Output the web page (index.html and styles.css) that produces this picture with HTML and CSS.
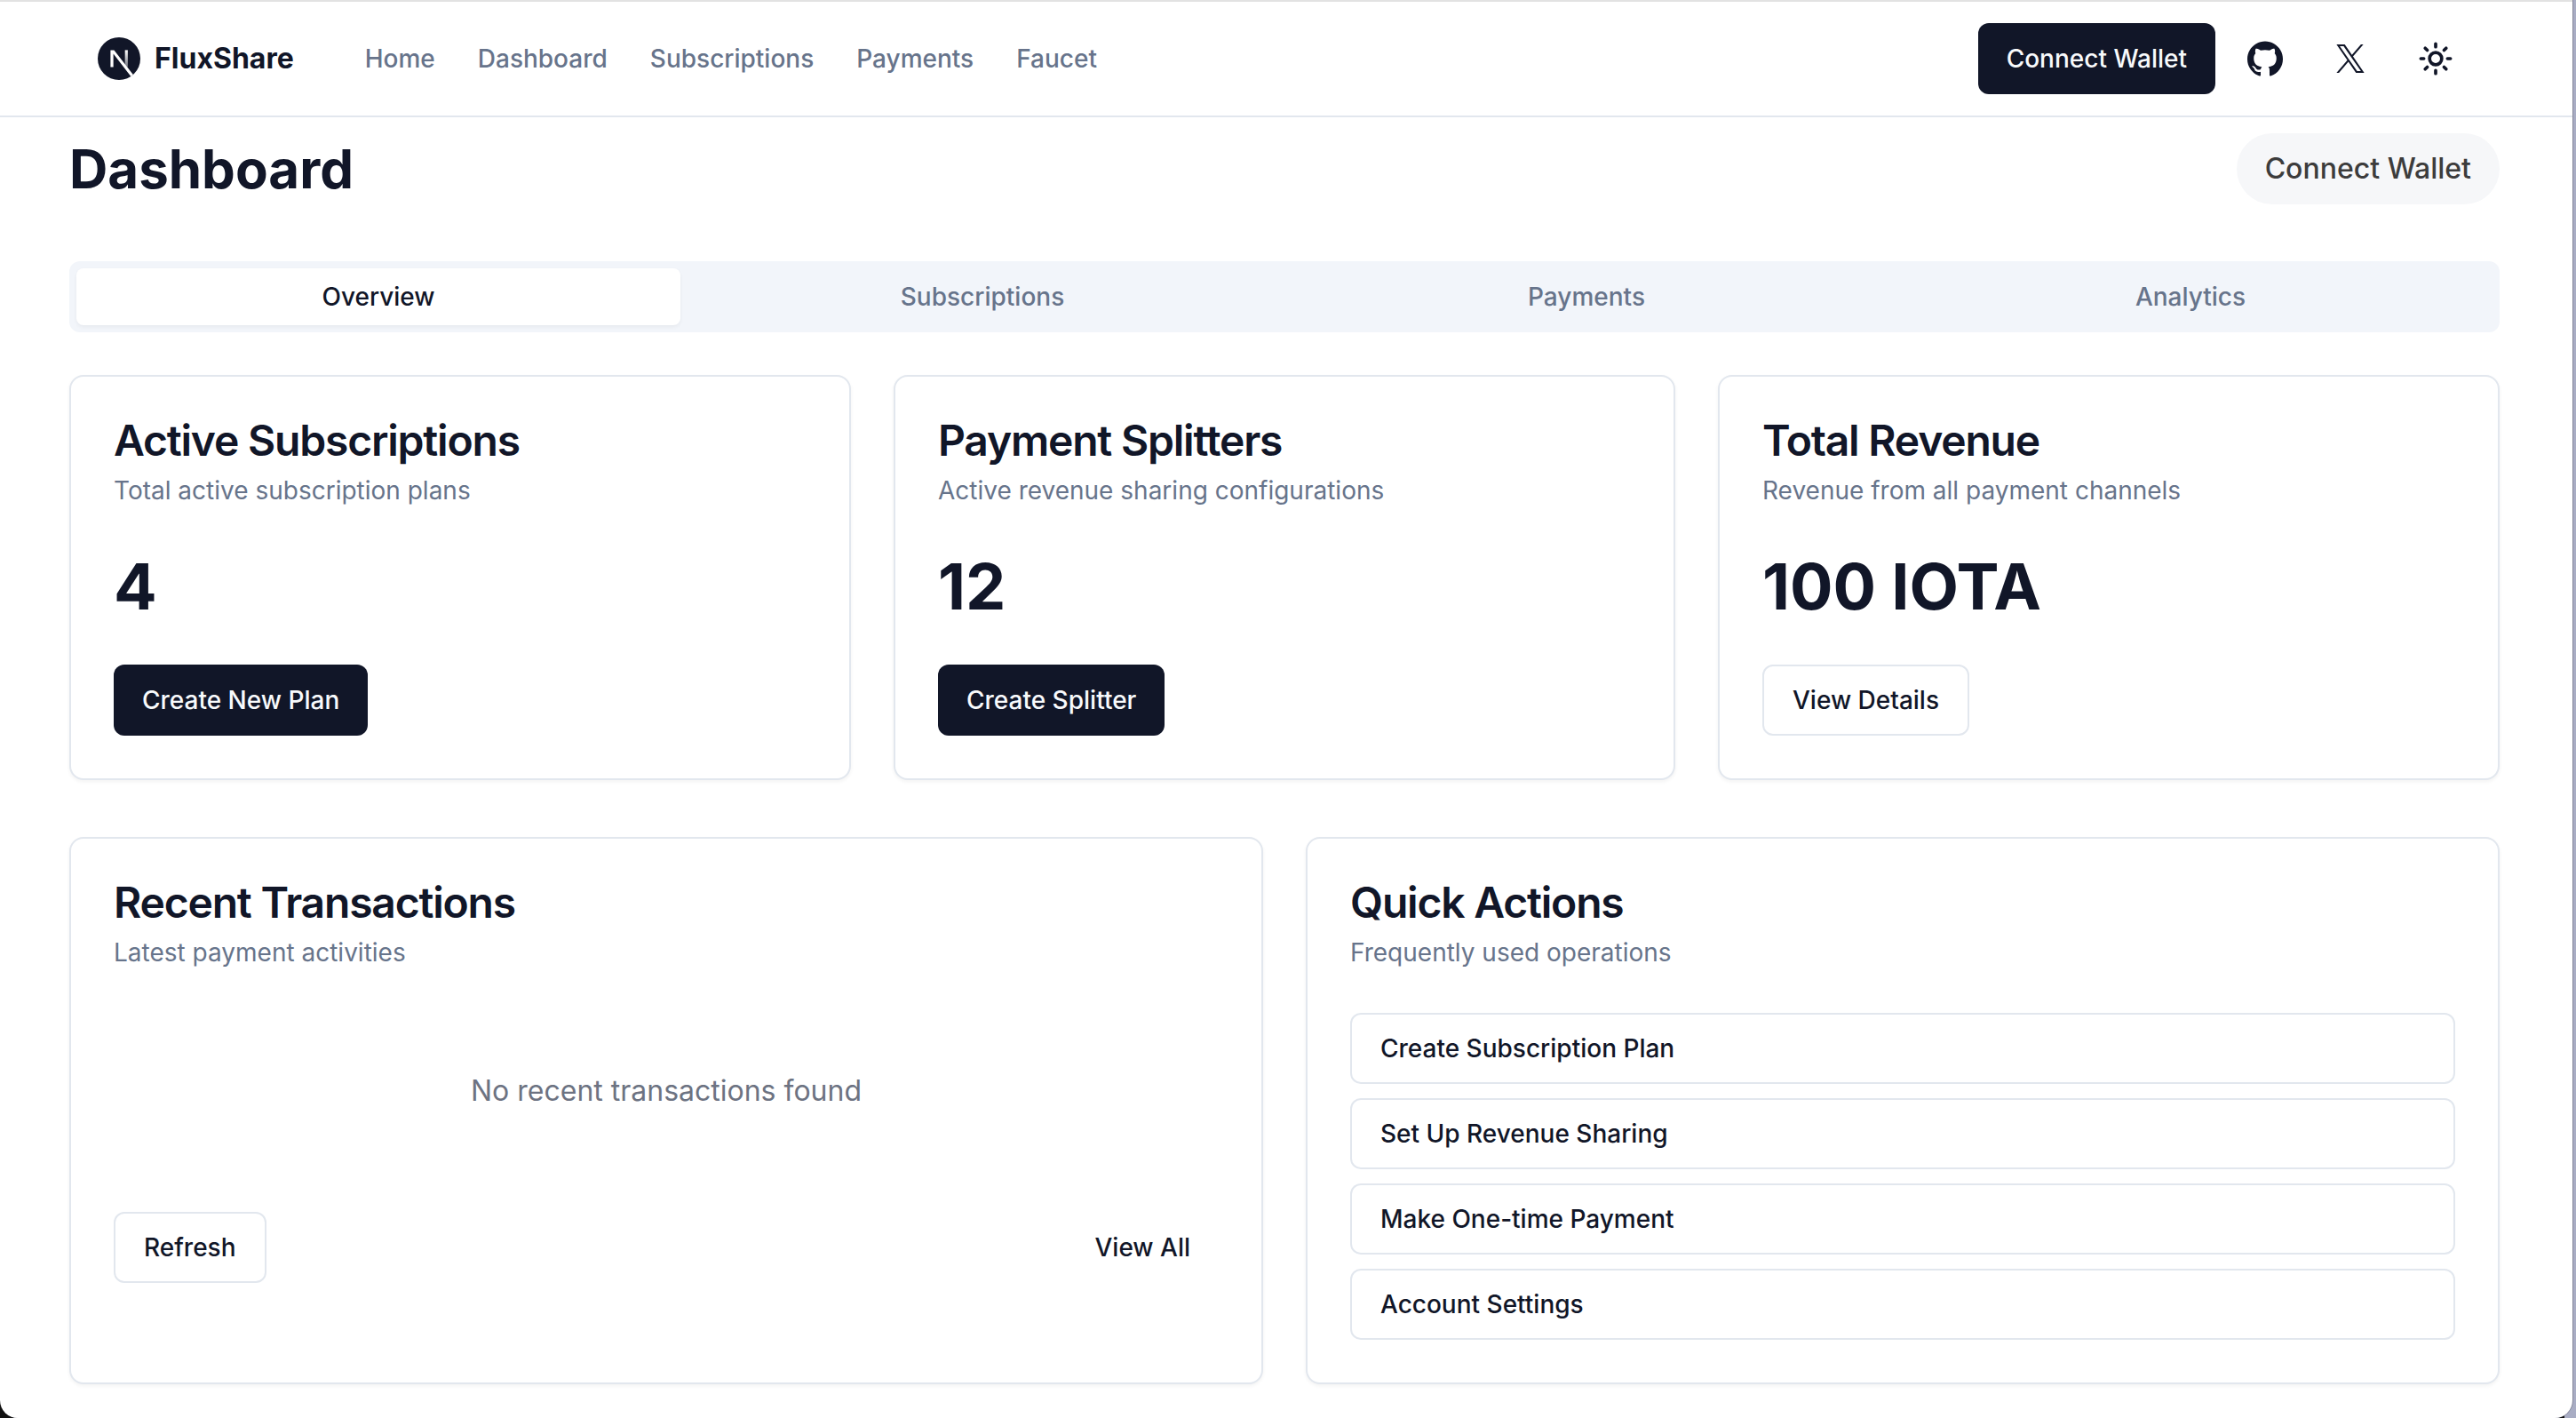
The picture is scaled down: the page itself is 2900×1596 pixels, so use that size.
FILE: index.html
```html
<!DOCTYPE html>
<html lang="en">
<head>
<meta charset="utf-8">
<title>FluxShare</title>
<link rel="stylesheet" href="styles.css">
</head>
<body>
<div class="window">
  <header class="site-header">
    <a class="brand" href="#">
      <svg class="brand-logo" viewBox="0 0 180 180" aria-hidden="true">
        <defs>
          <linearGradient id="bar" x1="121" y1="54" x2="120.8" y2="126" gradientUnits="userSpaceOnUse"><stop stop-color="#fff"/><stop offset="1" stop-color="#fff" stop-opacity="0.4"/></linearGradient>
        </defs>
        <circle cx="90" cy="90" r="90" fill="#111628"/>
        <path d="M149.508 157.52L69.142 54H54V125.97H66.1136V69.3836L139.999 164.845C143.333 162.614 146.509 160.165 149.508 157.52Z" fill="#fff"/>
        <rect x="115" y="54" width="12" height="72" fill="url(#bar)"/>
      </svg>
      <span>FluxShare</span>
    </a>
    <nav class="site-nav">
      <a href="#">Home</a>
      <a href="#">Dashboard</a>
      <a href="#">Subscriptions</a>
      <a href="#">Payments</a>
      <a href="#">Faucet</a>
    </nav>
    <div class="header-actions">
      <button class="btn btn-primary" type="button">Connect Wallet</button>
      <a class="icon-btn" href="#" aria-label="GitHub">
        <svg class="icon-github" viewBox="0 0 438.549 438.549"><path fill="currentColor" d="M409.132 114.573c-19.608-33.596-46.205-60.194-79.798-79.8-33.598-19.607-70.277-29.408-110.063-29.408-39.781 0-76.472 9.804-110.063 29.408-33.596 19.605-60.192 46.204-79.8 79.8C9.803 148.168 0 184.854 0 224.63c0 47.78 13.94 90.745 41.827 128.906 27.884 38.164 63.906 64.572 108.063 79.227 5.14.954 8.945.283 11.419-1.996 2.475-2.282 3.711-5.14 3.711-8.562 0-.571-.049-5.708-.144-15.417a2549.81 2549.81 0 01-.144-25.406l-6.567 1.136c-4.187.767-9.469 1.092-15.846 1-6.374-.089-12.991-.757-19.842-1.999-6.854-1.231-13.229-4.086-19.13-8.559-5.898-4.473-10.085-10.328-12.56-17.556l-2.855-6.57c-1.903-4.374-4.899-9.233-8.992-14.559-4.093-5.331-8.232-8.945-12.419-10.848l-1.999-1.431c-1.332-.951-2.568-2.098-3.711-3.429-1.142-1.331-1.997-2.663-2.568-3.997-.572-1.335-.098-2.43 1.427-3.289 1.525-.859 4.281-1.276 8.28-1.276l5.708.853c3.807.763 8.516 3.042 14.133 6.851 5.614 3.806 10.229 8.754 13.846 14.842 4.38 7.806 9.657 13.754 15.846 17.847 6.184 4.093 12.419 6.136 18.699 6.136 6.28 0 11.704-.476 16.274-1.423 4.565-.952 8.848-2.383 12.847-4.285 1.713-12.758 6.377-22.559 13.988-29.41-10.848-1.14-20.601-2.857-29.264-5.14-8.658-2.286-17.605-5.996-26.835-11.14-9.235-5.137-16.896-11.516-22.985-19.126-6.09-7.614-11.088-17.61-14.987-29.979-3.901-12.374-5.852-26.648-5.852-42.826 0-23.035 7.52-42.637 22.557-58.817-7.044-17.318-6.379-36.732 1.997-58.24 5.52-1.715 13.706-.428 24.554 3.853 10.85 4.283 18.794 7.952 23.84 10.994 5.046 3.041 9.089 5.618 12.135 7.708 17.705-4.947 35.976-7.421 54.818-7.421s37.117 2.474 54.823 7.421l10.849-6.849c7.419-4.57 16.18-8.758 26.262-12.565 10.088-3.805 17.802-4.853 23.134-3.138 8.562 21.509 9.325 40.922 2.279 58.24 15.036 16.18 22.559 35.787 22.559 58.817 0 16.178-1.958 30.497-5.853 42.966-3.9 12.471-8.941 22.457-15.125 29.979-6.191 7.521-13.901 13.85-23.131 18.986-9.232 5.14-18.182 8.85-26.84 11.136-8.662 2.286-18.415 4.004-29.263 5.146 9.894 8.562 14.842 22.077 14.842 40.539v60.237c0 3.422 1.19 6.279 3.572 8.562 2.379 2.279 6.136 2.95 11.276 1.995 44.163-14.653 80.185-41.062 108.068-79.226 27.88-38.161 41.825-81.126 41.825-128.906-.01-39.771-9.818-76.454-29.414-110.049z"/></svg>
      </a>
      <a class="icon-btn" href="#" aria-label="X">
        <svg class="icon-x" viewBox="0 0 1200 1227"><path fill="currentColor" d="M714.163 519.284L1160.89 0H1055.03L667.137 450.887L357.328 0H0L468.492 681.821L0 1226.37H105.866L515.491 750.218L842.672 1226.37H1200L714.137 519.284H714.163ZM569.165 687.828L521.697 619.934L144.011 79.6944H306.615L611.412 515.685L658.88 583.579L1055.08 1150.3H892.476L569.165 687.854V687.828Z"/></svg>
      </a>
      <button class="icon-btn" type="button" aria-label="Toggle theme">
        <svg class="icon-sun" viewBox="0 0 24 24" fill="none" stroke="currentColor" stroke-width="2.2" stroke-linecap="round"><circle cx="12" cy="12" r="4.1"/><path d="M12 2v2M12 20v2M4.93 4.93l1.41 1.41M17.66 17.66l1.41 1.41M2 12h2M20 12h2M6.34 17.66l-1.41 1.41M19.07 4.93l-1.41 1.41"/></svg>
      </button>
    </div>
  </header>

  <main class="page">
    <div class="page-head">
      <h1>Dashboard</h1>
      <button class="wallet-pill" type="button">Connect Wallet</button>
    </div>

    <div class="tabs" role="tablist">
      <button class="tab tab-active" role="tab" type="button" aria-selected="true">Overview</button>
      <button class="tab" role="tab" type="button">Subscriptions</button>
      <button class="tab" role="tab" type="button">Payments</button>
      <button class="tab" role="tab" type="button">Analytics</button>
    </div>

    <div class="grid grid-stats">
      <section class="card">
        <h2>Active Subscriptions</h2>
        <p class="card-desc">Total active subscription plans</p>
        <p class="stat">4</p>
        <button class="btn btn-primary" type="button">Create New Plan</button>
      </section>
      <section class="card">
        <h2>Payment Splitters</h2>
        <p class="card-desc">Active revenue sharing configurations</p>
        <p class="stat">12</p>
        <button class="btn btn-primary" type="button">Create Splitter</button>
      </section>
      <section class="card">
        <h2>Total Revenue</h2>
        <p class="card-desc">Revenue from all payment channels</p>
        <p class="stat">100 IOTA</p>
        <button class="btn btn-outline" type="button">View Details</button>
      </section>
    </div>

    <div class="grid grid-panels">
      <section class="card">
        <h2>Recent Transactions</h2>
        <p class="card-desc">Latest payment activities</p>
        <p class="empty">No recent transactions found</p>
        <div class="card-foot">
          <button class="btn btn-outline" type="button">Refresh</button>
          <button class="btn btn-ghost" type="button">View All</button>
        </div>
      </section>
      <section class="card">
        <h2>Quick Actions</h2>
        <p class="card-desc">Frequently used operations</p>
        <div class="actions">
          <button class="btn btn-outline" type="button">Create Subscription Plan</button>
          <button class="btn btn-outline" type="button">Set Up Revenue Sharing</button>
          <button class="btn btn-outline" type="button">Make One-time Payment</button>
          <button class="btn btn-outline" type="button">Account Settings</button>
        </div>
      </section>
    </div>
  </main>
</div>
</body>
</html>
```
FILE: styles.css
```css
:root {
  --ink: #111628;
  --muted: #67748b;
  --line: #e2e7ee;
}

* { box-sizing: border-box; }

body {
  margin: 0;
  background: linear-gradient(to left, #a9adc4 13px, #111 13px);
  color: var(--ink);
  font-family: Inter, "Liberation Sans", sans-serif;
  font-size: 28px;
  line-height: 40px;
}

h1, h2, p { margin: 0; }
a { color: inherit; text-decoration: none; }
button { font: inherit; color: inherit; border: 0; background: none; cursor: pointer; }

.window {
  min-height: 100vh;
  margin-right: 4px;
  background: #fff;
  border-top: 2px solid #e2e2e2;
  border-radius: 0 0 20px 20px;
  box-shadow: 1px 0 0 #85879a;
}

.site-header {
  display: flex;
  align-items: center;
  height: 130px;
  padding: 0 114px 0 110px;
  border-bottom: 2px solid var(--line);
}

.brand {
  display: flex;
  align-items: center;
  gap: 16px;
  margin-right: 80px;
  font-size: 32px;
  font-weight: 700;
}
.brand-logo { width: 48px; height: 48px; }

.site-nav {
  display: flex;
  gap: 48px;
  color: var(--muted);
  font-weight: 500;
}

.header-actions {
  display: flex;
  align-items: center;
  gap: 16px;
  margin-left: auto;
}
.icon-btn {
  display: flex;
  align-items: center;
  justify-content: center;
  width: 80px;
  height: 80px;
  padding: 0;
}
.icon-github { width: 40px; height: 40px; }
.icon-x { width: 32px; height: 32px; }
.icon-sun { width: 40px; height: 40px; }

.btn {
  height: 80px;
  padding: 0 32px;
  border-radius: 12px;
  font-weight: 500;
}
.btn-primary { background: var(--ink); color: #f8fafc; }
.btn-outline { background: #fff; border: 2px solid var(--line); }

.page { padding: 18px 82px 38px 78px; }

.page-head {
  display: flex;
  align-items: center;
  justify-content: space-between;
  margin-bottom: 64px;
}
h1 { font-size: 60px; line-height: 72px; font-weight: 700; }
.wallet-pill {
  height: 80px;
  padding: 0 32px;
  border-radius: 40px;
  background: #f6f7f9;
  color: #3c3c3c;
  font-size: 32px;
  font-weight: 500;
}

.tabs {
  display: flex;
  padding: 8px;
  margin-bottom: 48px;
  border-radius: 12px;
  background: #f2f5fa;
}
.tab {
  flex: 1;
  height: 64px;
  padding: 0;
  border-radius: 8px;
  color: var(--muted);
  font-weight: 500;
}
.tab-active {
  background: #fff;
  color: var(--ink);
  box-shadow: 0 2px 4px rgb(0 0 0 / 5%);
}

.grid { display: grid; gap: 48px; }
.grid-stats { grid-template-columns: repeat(3, 1fr); margin-bottom: 64px; }
.grid-panels { grid-template-columns: repeat(2, 1fr); }

.card {
  padding: 48px;
  border: 2px solid var(--line);
  border-radius: 16px;
  background: #fff;
  box-shadow: 0 2px 4px rgb(0 0 0 / 5%);
}
h2 {
  margin-bottom: 12px;
  font-size: 48px;
  line-height: 48px;
  font-weight: 600;
  letter-spacing: -0.025em;
}
.card-desc { margin-bottom: 48px; color: var(--muted); }
.stat {
  margin-bottom: 48px;
  font-size: 72px;
  line-height: 80px;
  font-weight: 700;
}

.empty {
  padding: 64px 0;
  margin-bottom: 48px;
  color: #6d7382;
  font-size: 32px;
  line-height: 48px;
  text-align: center;
}
.card-foot { display: flex; justify-content: space-between; }

.actions { display: grid; gap: 16px; }
.actions .btn { text-align: left; }
```
